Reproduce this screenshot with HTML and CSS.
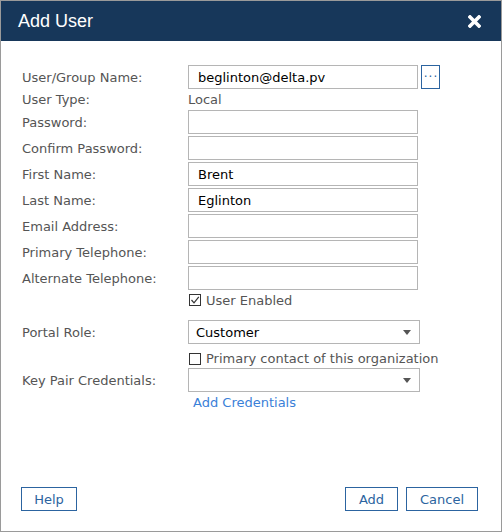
FILE: index.html
```html
<!DOCTYPE html>
<html>
<head>
<meta charset="utf-8">
<link rel="stylesheet" href="styles.css">
</head>
<body>
<div class="dialog">
  <div class="header">
    <span class="title">Add User</span>
    <svg class="close" width="13" height="13" viewBox="0 0 13 13"><path d="M2 2 L11 11 M11 2 L2 11" stroke="#fff" stroke-width="3.6" stroke-linecap="square"/></svg>
  </div>
  <div class="content">
    <div class="form">
      <div class="label">User/Group Name:</div>
      <div class="field"><div class="input">beglinton@delta.pv</div><div class="browse">···</div></div>

      <div class="label">User Type:</div>
      <div class="field"><span class="static">Local</span></div>

      <div class="label">Password:</div>
      <div class="field"><div class="input"></div></div>

      <div class="label">Confirm Password:</div>
      <div class="field"><div class="input"></div></div>

      <div class="label">First Name:</div>
      <div class="field"><div class="input">Brent</div></div>

      <div class="label">Last Name:</div>
      <div class="field"><div class="input">Eglinton</div></div>

      <div class="label">Email Address:</div>
      <div class="field"><div class="input"></div></div>

      <div class="label">Primary Telephone:</div>
      <div class="field"><div class="input"></div></div>

      <div class="label">Alternate Telephone:</div>
      <div class="field"><div class="input"></div></div>

      <div class="label"></div>
      <div class="field check-row enabled"><span class="cb"><svg width="10" height="10" viewBox="0 0 10 10"><path d="M1.5 5 L4 7.8 L8.8 1.8" fill="none" stroke="#333" stroke-width="1.2"/></svg></span><span class="cb-text">User Enabled</span></div>

      <div class="label">Portal Role:</div>
      <div class="field"><div class="select">Customer<span class="arrow"></span></div></div>

      <div class="label"></div>
      <div class="field check-row primary"><span class="cb"></span><span class="cb-text">Primary contact of this organization</span></div>

      <div class="label">Key Pair Credentials:</div>
      <div class="field"><div class="select"><span class="arrow"></span></div></div>

      <div class="label"></div>
      <div class="field link-row"><a class="link">Add Credentials</a></div>
    </div>
    <div class="footer">
      <button class="btn help">Help</button>
      <div class="right">
        <button class="btn add">Add</button>
        <button class="btn cancel">Cancel</button>
      </div>
    </div>
  </div>
</div>
</body>
</html>
```

FILE: styles.css
```css
html, body {
  margin: 0;
  padding: 0;
  background: #fff;
}
.dialog {
  width: 502px;
  height: 532px;
  box-sizing: border-box;
  border: 1px solid #9a9a9a;
  display: flex;
  flex-direction: column;
  font-family: "DejaVu Sans", Verdana, sans-serif;
}
.header {
  height: 40px;
  background: #17375a;
  display: flex;
  align-items: center;
  justify-content: space-between;
  padding: 0 20px 0 17px;
  flex: none;
}
.title {
  font-family: "Liberation Sans", Arial, sans-serif;
  color: #fff;
  font-size: 18px;
}
.close {
  display: block;
}
.content {
  flex: 1;
  display: flex;
  flex-direction: column;
  justify-content: space-between;
  padding: 24px 23px 20px 20px;
}
.form {
  display: grid;
  grid-template-columns: 167px 1fr;
  grid-template-rows: 24px 17px repeat(7, 24px) 26px 24px 20px 24px 16px;
  row-gap: 2px;
}
.label {
  font-size: 13px;
  color: #555;
  display: flex;
  align-items: center;
  padding-left: 1px;
}
.field {
  display: flex;
  align-items: center;
}
.input {
  width: 230px;
  height: 24px;
  box-sizing: border-box;
  border: 1px solid #b5b5b5;
  font-size: 13px;
  color: #000;
  padding-left: 9px;
  display: flex;
  align-items: center;
}
.browse {
  width: 19px;
  height: 24px;
  box-sizing: border-box;
  border: 1px solid #2c64a0;
  margin-left: 3px;
  color: #2c64a0;
  font-size: 12px;
  letter-spacing: 1px;
  padding-left: 1px;
  display: flex;
  align-items: center;
  justify-content: center;
}
.static {
  font-size: 13px;
  color: #555;
}
.check-row {
  padding-left: 1px;
}
.check-row.enabled {
  align-items: flex-start;
  padding-top: 1px;
}
.check-row.primary {
  align-items: flex-end;
}
.cb {
  width: 12px;
  height: 12px;
  box-sizing: border-box;
  border: 1px solid #333;
  display: flex;
  align-items: center;
  justify-content: center;
  margin-right: 5px;
  flex: none;
}
.check-row.enabled .cb { margin-top: 1px; }
.check-row.primary .cb { margin-bottom: 1px; }
.cb svg { display: block; }
.cb-text {
  font-size: 13px;
  color: #555;
  line-height: 15px;
}
.select {
  width: 232px;
  height: 24px;
  box-sizing: border-box;
  border: 1px solid #b5b5b5;
  font-size: 13px;
  color: #000;
  padding-left: 7px;
  display: flex;
  align-items: center;
  position: relative;
}
.arrow {
  position: absolute;
  right: 8px;
  top: 9px;
  width: 0;
  height: 0;
  border-left: 4px solid transparent;
  border-right: 4px solid transparent;
  border-top: 5px solid #555;
}
.link-row {
  padding-left: 5px;
}
.link {
  font-size: 13px;
  color: #3a80d8;
  text-decoration: none;
}
.footer {
  display: flex;
  justify-content: space-between;
  align-items: flex-end;
}
.right {
  display: flex;
  gap: 8px;
}
.btn {
  height: 24px;
  box-sizing: border-box;
  border: 1px solid #2c64a0;
  background: #fff;
  color: #2c64a0;
  font-family: "DejaVu Sans", Verdana, sans-serif;
  font-size: 13px;
  padding: 0;
}
.help { width: 56px; }
.add { width: 53px; }
.cancel { width: 72px; }
```
